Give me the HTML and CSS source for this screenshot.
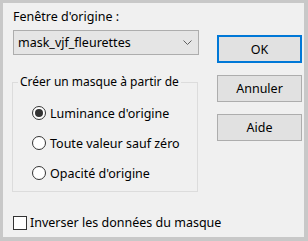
FILE: index.html
```html
<!doctype html>
<html lang="fr">

<head>
    <meta charset="utf-8">
    <title>Masque</title>
    <link rel="stylesheet" href="styles.css">
</head>

<body>
    <div class="dialog">
        <div class="dialog-main">
            <div class="dialog-left">
                <div class="field-label">Fenêtre d'origine :</div>
                <div class="combo">
                    <span>mask_vjf_fleurettes</span>
                    <svg class="combo-arrow" width="9" height="6" viewBox="0 0 9 6">
                        <path d="M0.5 0.5 L4.5 4.5 L8.5 0.5" fill="none" stroke="#606060" stroke-width="1"/>
                    </svg>
                </div>
                <fieldset class="group">
                    <legend>Créer un masque à partir de</legend>
                    <label class="radio"><span class="radio-dot radio-on"></span>Luminance d'origine</label>
                    <label class="radio"><span class="radio-dot"></span>Toute valeur sauf zéro</label>
                    <label class="radio"><span class="radio-dot"></span>Opacité d'origine</label>
                </fieldset>
            </div>
            <div class="dialog-buttons">
                <button class="btn btn-default">OK</button>
                <button class="btn">Annuler</button>
                <button class="btn">Aide</button>
            </div>
        </div>
        <label class="check"><span class="check-box"></span>Inverser les données du masque</label>
    </div>
</body>

</html>
```

FILE: styles.css
```css
html,
body {
    margin: 0;
    background-color: rgb(200, 200, 200);
}

body {
    padding: 3px 4px 4px 3px;
    font-family: "Noto Sans", "Open Sans", sans-serif;
    font-size: 12.5px;
    color: rgb(0, 0, 0);
}

.dialog {
    width: 301px;
    height: 234px;
    box-sizing: border-box;
    background-color: rgb(240, 240, 240);
    padding: 6px 2px 0 9px;
}

.dialog-main {
    display: flex;
    gap: 18px;
}

.dialog-left {
    width: 187px;
}

.field-label {
    line-height: 16px;
    padding-left: 1px;
}

.combo {
    margin: 5px 0 0 1px;
    height: 25px;
    box-sizing: border-box;
    border: 1px solid rgb(173, 173, 173);
    background-color: rgb(229, 229, 229);
    display: flex;
    align-items: center;
    justify-content: space-between;
    padding: 0 6px 0 4px;
}

.combo-arrow {
    display: block;
}

.group {
    margin: 19px 1px 0 0;
    padding: 8px 0 0 0;
    border: 1px solid rgb(220, 220, 220);
    height: 118px;
    box-sizing: border-box;
    min-width: 0;
}

.group legend {
    padding: 0 2px;
    margin-left: 5px;
    line-height: 16px;
    font-size: 12px;
    white-space: nowrap;
}

.radio {
    display: flex;
    align-items: center;
    height: 30px;
    gap: 4px;
    padding-left: 19px;
}

.radio-dot {
    width: 14px;
    height: 14px;
    box-sizing: border-box;
    border: 1px solid rgb(51, 51, 51);
    border-radius: 50%;
    background-color: rgb(255, 255, 255);
    display: flex;
    align-items: center;
    justify-content: center;
}

.radio-on::after {
    content: "";
    width: 8px;
    height: 8px;
    border-radius: 50%;
    background-color: rgb(51, 51, 51);
}

.dialog-buttons {
    display: flex;
    flex-direction: column;
    gap: 12px;
    padding-top: 26px;
}

.btn {
    width: 85px;
    height: 27px;
    margin: 0;
    font: inherit;
    color: rgb(0, 0, 0);
    background-color: rgb(225, 225, 225);
    border: 1px solid rgb(173, 173, 173);
}

.btn-default {
    height: 28px;
    border: 2px solid rgb(0, 120, 215);
}

.check {
    display: flex;
    align-items: center;
    gap: 3px;
    margin: 22px 0 0 1px;
}

.check-box {
    width: 14px;
    height: 14px;
    box-sizing: border-box;
    border: 1px solid rgb(51, 51, 51);
    background-color: rgb(255, 255, 255);
}
```
